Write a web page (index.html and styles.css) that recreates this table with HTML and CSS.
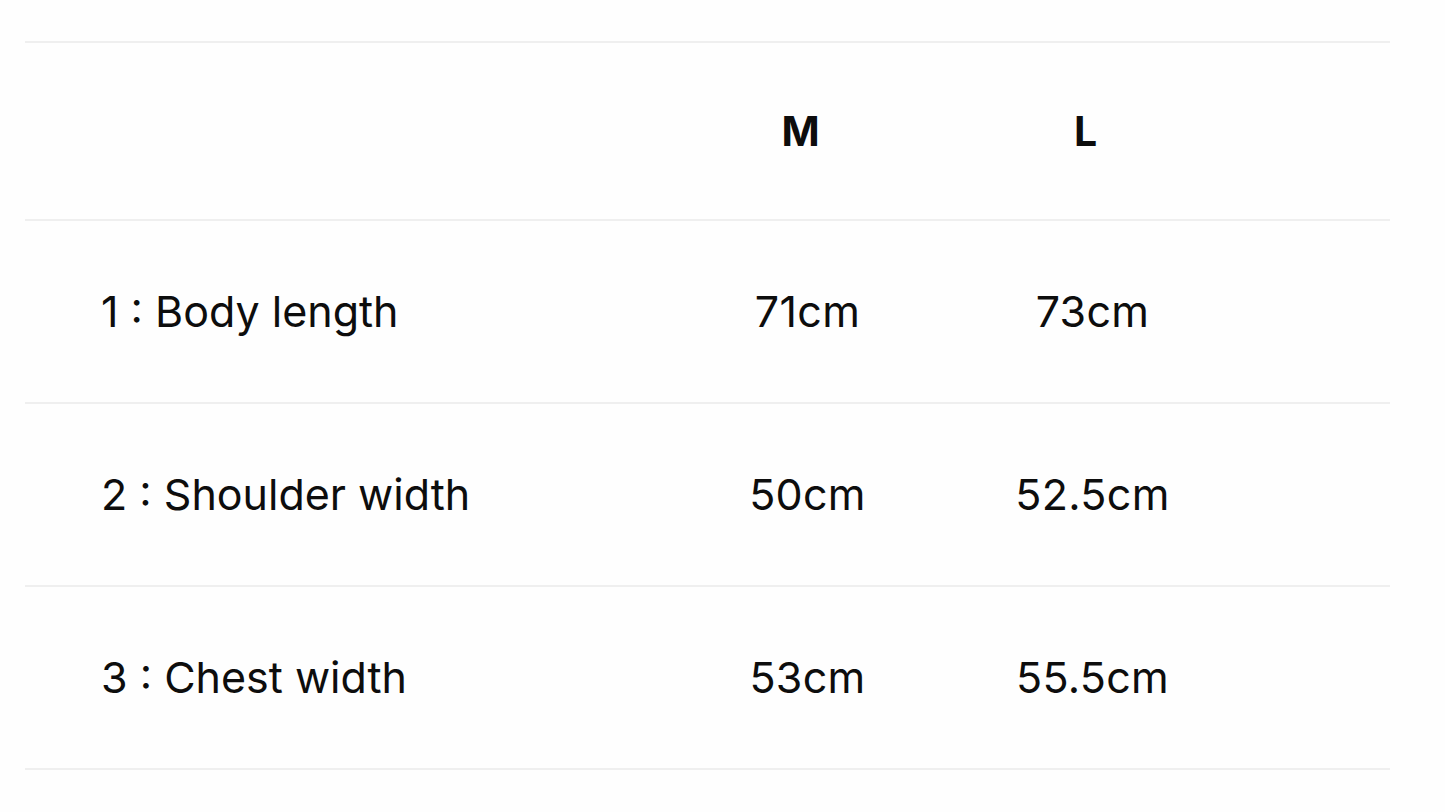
FILE: index.html
```html
<!DOCTYPE html>
<html lang="en">
<head>
<meta charset="utf-8">
<title>Size chart</title>
<link rel="stylesheet" href="styles.css">
</head>
<body>
<div class="page">
  <div class="table">
    <div class="row head">
      <div class="cell label"></div>
      <div class="cell size">M</div>
      <div class="cell size">L</div>
    </div>
    <div class="row">
      <div class="cell label">1 : Body length</div>
      <div class="cell val">71cm</div>
      <div class="cell val">73cm</div>
    </div>
    <div class="row">
      <div class="cell label">2 : Shoulder width</div>
      <div class="cell val">50cm</div>
      <div class="cell val">52.5cm</div>
    </div>
    <div class="row">
      <div class="cell label">3 : Chest width</div>
      <div class="cell val">53cm</div>
      <div class="cell val">55.5cm</div>
    </div>
  </div>
</div>
</body>
</html>
```
FILE: styles.css
```css
html, body {
  margin: 0;
  padding: 0;
  background: #fefefe;
}
.page {
  padding: 41px 55px 0 25px;
  font-family: Inter, "Liberation Sans", sans-serif;
  color: #0d0d0d;
}
.table {
  width: 1365px;
  border-top: 2px solid #efefef;
}
.row {
  display: grid;
  grid-template-columns: 640px 285px 285px 1fr;
  align-items: center;
  height: 181px;
  border-bottom: 2px solid #efefef;
}
.row.head {
  height: 176px;
}
.cell {
  font-size: 43px;
  line-height: 1;
  letter-spacing: 0.3px;
}
.label {
  padding-left: 76px;
  letter-spacing: 0;
}
.size {
  text-align: center;
  font-weight: 700;
  font-size: 41px;
  letter-spacing: 0;
  padding-right: 14px;
}
.val {
  text-align: center;
}
```
